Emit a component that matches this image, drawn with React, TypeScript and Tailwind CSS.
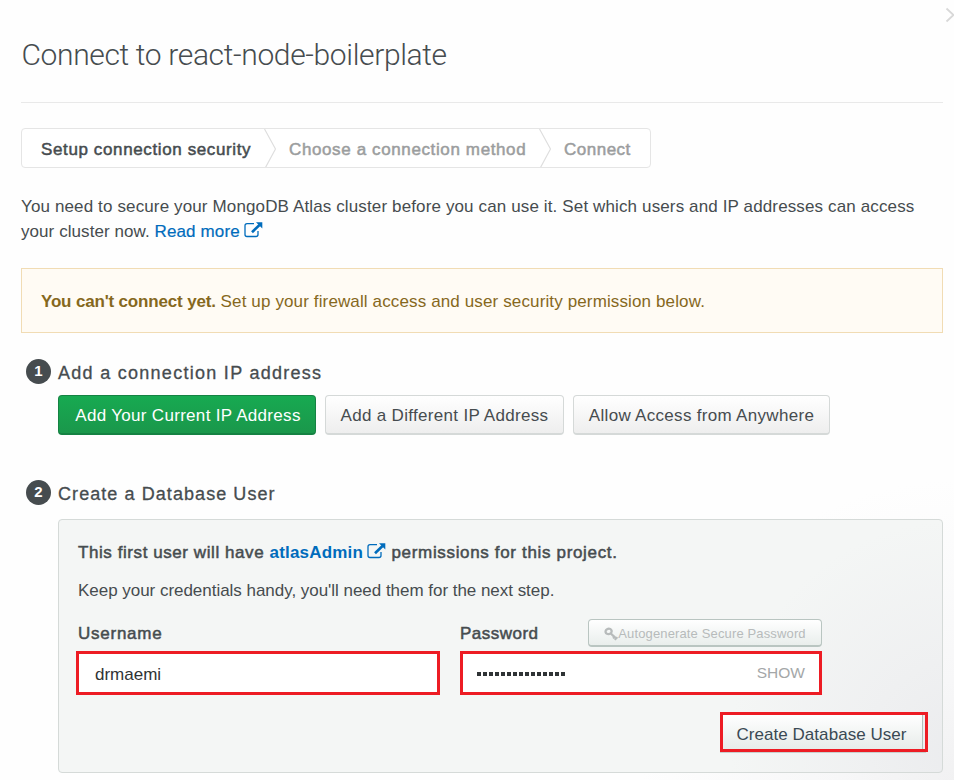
import type { ReactNode } from "react";

const semi = "[-webkit-text-stroke:0.5px_currentColor]";

function ExternalIcon() {
  return (
    <svg width="19" height="16" viewBox="0 0 19 16" className="mb-[3px] inline-block shrink-0" fill="none">
      <path d="M10 1.7H3Q1 1.7 1 3.7V12.5Q1 14.5 3 14.5H12Q14 14.5 14 12.5V9" stroke="currentColor" strokeWidth="1.3" />
      <path d="M8 10.2L15.5 3" stroke="currentColor" strokeWidth="2.6" />
      <path d="M12 0.2H18.3V6.5Z" fill="currentColor" />
    </svg>
  );
}

function KeyIcon() {
  return (
    <svg width="14" height="14" viewBox="0 0 14 14" className="shrink-0" fill="none" stroke="currentColor">
      <ellipse cx="4.6" cy="4.4" rx="3.1" ry="2.7" strokeWidth="2.3" transform="rotate(-15 4.6 4.4)" />
      <path d="M6.3 6L12.2 11.6" strokeWidth="2.3" />
      <path d="M9 11.3L10.6 9.6M10.8 13L13.4 10.2" strokeWidth="1.8" />
    </svg>
  );
}

function Chevron() {
  return (
    <svg width="12" height="38" viewBox="0 0 12 38" className="shrink-0" fill="none">
      <path d="M0.5 0L11.5 20L1.5 38.5" stroke="#dedede" strokeWidth="1.2" />
    </svg>
  );
}

function StepHeading({ n, children }: { n: number; children: ReactNode }) {
  return (
    <div className="flex h-[25px] items-center pl-[5px]">
      <span className="flex size-[25px] items-center justify-center rounded-full bg-[#464c4f] pb-px text-[15px] font-bold text-white">{n}</span>
      <h2 className="ml-[7px] pt-[3px] text-[18px] leading-[21px] [-webkit-text-stroke:0.3px_currentColor]">{children}</h2>
    </div>
  );
}

export default function App() {
  return (
    <div className="relative h-[780px] w-[954px] overflow-hidden whitespace-nowrap bg-white bg-[radial-gradient(circle_at_960px_800px,#f0f0f1_0px,#f7f7f8_120px,#fefefe_320px)] pl-[21px] pr-[11px] font-['Liberation_Sans',Arial,sans-serif] text-[17px] text-[#464c4f]">
      <svg className="absolute right-0 top-[7px]" width="9" height="16" viewBox="0 0 9 16" fill="none">
        <path d="M1.5 1.5L8.5 8L1.5 14.5" stroke="#d8d8d8" strokeWidth="1.8" />
      </svg>

      <header className="h-[103px] border-b border-[#e9e9e9] pt-[36px]">
        <h1 className="pl-[0.5px] font-[Roboto] text-[30px] font-light leading-[38px] tracking-[-0.36px]">Connect to react-node-boilerplate</h1>
      </header>

      <nav className={`mt-[25px] flex h-[40px] w-[630px] items-center rounded-[4px] border border-[#e5e5e5] bg-white tracking-[0.62px] ${semi}`}>
        <span className="w-[242px] pl-[19px] pt-[3px]">Setup connection security</span>
        <Chevron />
        <span className="w-[263px] pl-[13px] pt-[3px] text-[#9b9d9e]">Choose a connection method</span>
        <Chevron />
        <span className="pl-[13px] pt-[3px] tracking-[0.5px] text-[#9b9d9e]">Connect</span>
      </nav>

      <div className="mt-[26px] h-[50px] leading-[25px] tracking-[0.13px]">
        <p>You need to secure your MongoDB Atlas cluster before you can use it. Set which users and IP addresses can access</p>
        <p className="flex h-[25px] items-center">
          <span className="tracking-[0.07px]">your cluster now.&nbsp;</span>
          <a className="flex items-center gap-[4px] text-[#006cbc] [-webkit-text-stroke:0.2px_currentColor]"><span>Read more</span><ExternalIcon /></a>
        </p>
      </div>

      <div className="mt-[24px] flex h-[65px] items-center border border-[#f1dcb4] bg-[#fffbf4] pl-[19px] pt-[2px] text-[#86681d]">
        <b className="tracking-[-0.17px]">You can't connect yet.</b>
        <span className="tracking-[0.13px]">&nbsp;Set up your firewall access and user security permission below.</span>
      </div>

      <section className="mt-[26px]">
        <StepHeading n={1}><span className="tracking-[1.28px]">Add a connection IP address</span></StepHeading>
        <div className="ml-[37px] mt-[11px] flex gap-[9px] tracking-[0.31px]">
          <button className="h-[40px] w-[258px] rounded-[4px] border border-b-2 border-[#158243] bg-linear-to-b from-[#17aa51] to-[#1a974b] pl-[2px] pt-[2px] text-white">Add Your Current IP Address</button>
          <button className="h-[40px] w-[239px] rounded-[4px] border border-b-2 border-[#d5d9d8] bg-linear-to-b from-white to-[#eeeeee] pt-[2px]">Add a Different IP Address</button>
          <button className="h-[40px] w-[257px] rounded-[4px] border border-b-2 border-[#d5d9d8] bg-linear-to-b from-white to-[#eeeeee] pt-[2px]">Allow Access from Anywhere</button>
        </div>
      </section>

      <section className="mt-[45px]">
        <StepHeading n={2}><span className="tracking-[1.07px]">Create a Database User</span></StepHeading>
        <div className="ml-[37px] mt-[14px] h-[254px] rounded-[4px] border border-[#d5dad8] bg-[#f4f6f5] bg-[radial-gradient(circle_at_900px_230px,#ebecee_0px,#eff0f1_90px,#f4f6f5_230px)] pl-[17px] pr-[14px] pt-[20px]">
          <p className="ml-[2px] flex h-[25px] items-center">
            <span className={`tracking-[0.57px] ${semi}`}>This first user will have&nbsp;</span>
            <a className="flex items-center gap-[4px] text-[#006cbc]"><b className="tracking-[0.2px]">atlasAdmin</b><ExternalIcon /></a>
            <span className={`tracking-[0.66px] ${semi}`}>&nbsp;permissions for this project.</span>
          </p>
          <p className="ml-[2px] mt-[13px] h-[25px] leading-[25px] tracking-[-0.03px]">Keep your credentials handy, you'll need them for the next step.</p>
          <div className="mt-[16px] flex gap-[20px]">
            <div className="w-[364px]">
              <div className="flex h-[32px] items-start pl-[2px] pt-[2px]"><span className={`tracking-[0.75px] ${semi}`}>Username</span></div>
              <div className="flex h-[44px] items-center border-3 border-[#ed1c24] bg-white pl-[16px] pt-[3px] text-[#2f3335]">drmaemi</div>
            </div>
            <div className="w-[362px]">
              <div className="flex h-[32px] items-start justify-between">
                <span className={`pt-[2px] tracking-[0.48px] ${semi}`}>Password</span>
                <button className="flex h-[28px] w-[234px] items-center justify-center rounded-[4px] border border-b-2 border-[#b9c5c1] bg-linear-to-b from-white to-[#e9eeec] pt-[2px] text-[13px] tracking-[0.14px] text-[#b7bbbb]"><KeyIcon />Autogenerate Secure Password</button>
              </div>
              <div className="flex h-[44px] items-center justify-between border-3 border-[#ed1c24] bg-white pl-[14px] pr-[14px]">
                <span className="flex gap-[2px] pt-px">{Array.from({ length: 15 }, (_, i) => <i key={i} className="size-[4px] bg-[#2f3335]" />)}</span>
                <span className="text-[15.5px] text-[#a4a7a8]">SHOW</span>
              </div>
            </div>
          </div>
          <div className="mt-[17px] flex justify-end">
            <div className="h-[40px] w-[208px] border-3 border-[#ed1c24] pr-[2px] shadow-[-1px_2px_0_-1px_#c8d0ce]">
              <button className="h-full w-full border-r border-[#b2bfbb] bg-linear-to-b from-white to-[#e7ecea] pr-[2px] pt-[5px] tracking-[0.05px] text-[#3a4a54]">Create Database User</button>
            </div>
          </div>
        </div>
      </section>
    </div>
  );
}
